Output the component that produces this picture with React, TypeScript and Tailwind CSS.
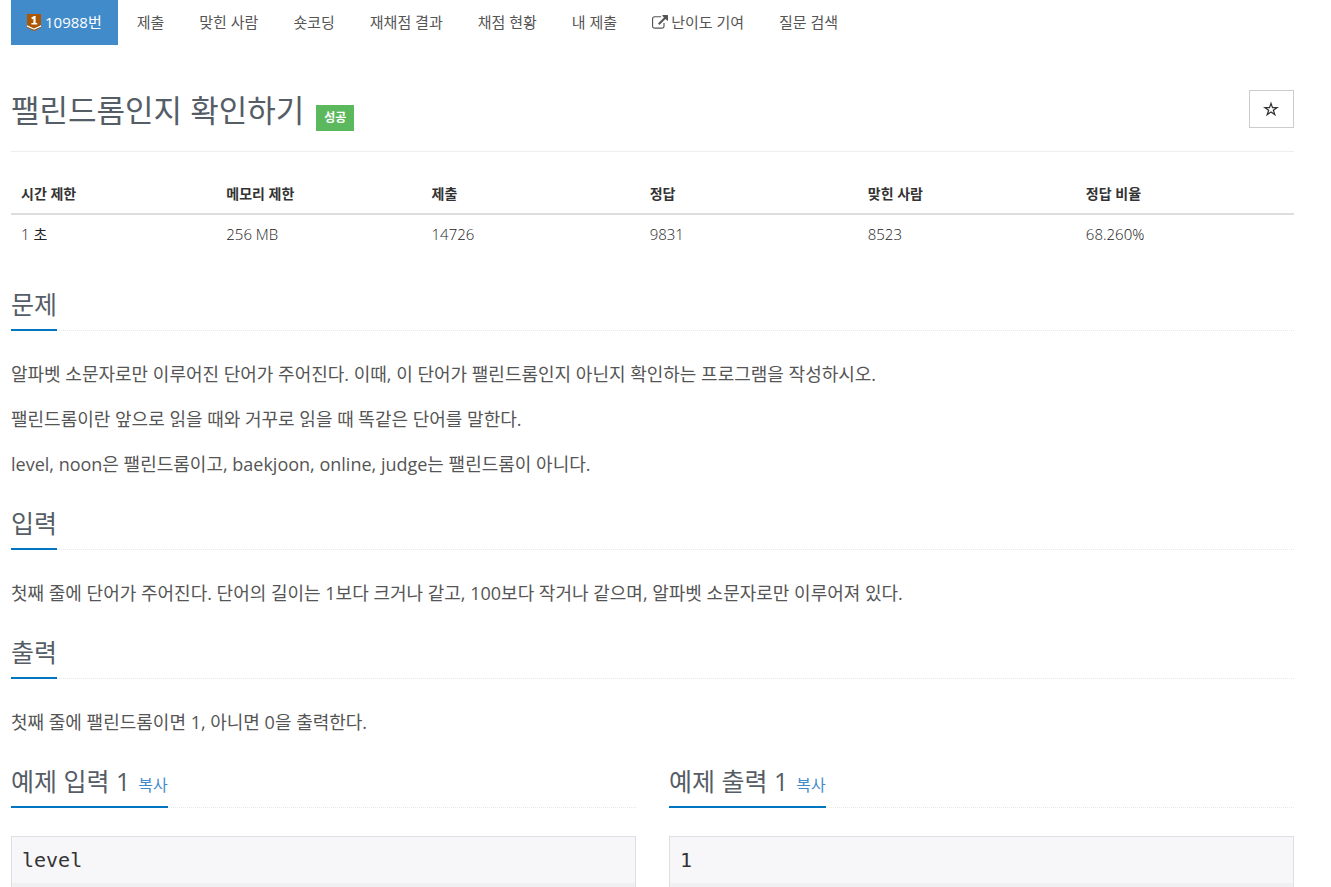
import type { ReactNode } from "react";

const tabs = ["제출", "맞힌 사람", "숏코딩", "재채점 결과", "채점 현황", "내 제출", "난이도 기여", "질문 검색"];

const stats = [
  { label: "시간 제한", value: "1 초", width: "w-[16%]" },
  { label: "메모리 제한", value: "256 MB", width: "w-[16%]" },
  { label: "제출", value: "14726", width: "w-[17%]" },
  { label: "정답", value: "9831", width: "w-[17%]" },
  { label: "맞힌 사람", value: "8523", width: "w-[17%]" },
  { label: "정답 비율", value: "68.260%", width: "w-[17%]" },
];

function TierIcon() {
  return (
    <svg viewBox="0 0 14 17" className="h-[17px] w-[14px]" aria-hidden="true">
      <path d="M0 0H14V11.5L7 14.6L0 11.5Z" fill="#ad5600" />
      <path d="M0 11.3L7 14.4L14 11.3V13L7 16L0 13Z" fill="#ffffff" />
      <path d="M0 12.8L7 15.8L14 12.8V13.8L7 17L0 13.8Z" fill="#ad5600" />
      <path d="M4.2 3.8L7 2H8.600V9H10.2V10.6H4.4V9H6.400V4.600L5.100 5.400Z" fill="#ffffff" />
    </svg>
  );
}

function ExternalLinkIcon() {
  return (
    <svg viewBox="0 0 1792 1792" className="size-4" fill="currentColor" aria-hidden="true">
      <path d="M1408 928v320q0 119-84.500 203.500T1120 1536H288q-119 0-203.500-84.500T0 1248V416q0-119 84.500-203.500T288 128h704q14 0 23 9t9 23v64q0 14-9 23t-23 9H288q-66 0-113 47t-47 113v832q0 66 47 113t113 47h832q66 0 113-47t47-113V928q0-14 9-23t23-9h64q14 0 23 9t9 23zm384-864v512q0 26-19 45t-45 19-45-19l-176-176-652 652q-10 10-23 10t-23-10L695 983q-10-10-10-23t10-23l652-652-176-176q-19-19-19-45t19-45 45-19h512q26 0 45 19t19 45z" />
    </svg>
  );
}

function Headline({ children }: { children: ReactNode }) {
  return (
    <div className="mb-7 flex border-b border-dotted border-[#e4e9f0]">
      <h2 className="-mb-px flex items-baseline gap-2 border-b-2 border-[#0076c0] pb-2 text-[25px] leading-[34px] text-[#555d66]">
        {children}
      </h2>
    </div>
  );
}

function Section({ title, paragraphs }: { title: string; paragraphs: string[] }) {
  return (
    <section className="mb-[27px]">
      <Headline>{title}</Headline>
      <div className="flex flex-col gap-[15px]">
        {paragraphs.map((p) => (
          <p key={p} className="text-lg leading-[30px] text-[#555555]">
            {p}
          </p>
        ))}
      </div>
    </section>
  );
}

function Sample({ title, data }: { title: string; data: string }) {
  return (
    <section>
      <Headline>
        {title}
        <button type="button" className="text-base leading-6 text-[#428bca]">
          복사
        </button>
      </Headline>
      <div className="border border-[#dedfe4] bg-[#f7f7f9]">
        <pre className="px-[10px] py-2 font-['DejaVu_Sans_Mono',monospace] text-xl leading-[30px] text-[#333333]">
          {data}
        </pre>
        <div className="h-4 bg-[#f0f0f0]" />
      </div>
    </section>
  );
}

export default function App() {
  return (
    <main className="h-screen overflow-hidden bg-white pr-[37px] pl-[11px] font-['Open_Sans','Noto_Sans_CJK_KR',sans-serif] text-[#333333]">
      <nav className="flex gap-[3px] text-[15px] leading-[45px] text-[#555555]">
        <a href="#problem" className="flex items-center gap-1 bg-[#428bca] px-4 text-white">
          <TierIcon />
          10988번
        </a>
        {tabs.map((tab) => (
          <a key={tab} href="#tab" className="flex items-center gap-[3px] px-4">
            {tab === "난이도 기여" && <ExternalLinkIcon />}
            {tab}
          </a>
        ))}
      </nav>

      <header id="problem" className="mt-[45px] flex items-start justify-between border-b border-[#eeeeee] pb-[21px]">
        <div className="flex items-end gap-3">
          <h1 className="text-[31px] leading-10 text-[#555d66]">팰린드롬인지 확인하기</h1>
          <span className="-mb-px bg-[#5cb85c] px-2 text-xs leading-[26px] font-bold text-white">성공</span>
        </div>
        <button type="button" aria-label="즐겨찾기" className="flex h-[38px] w-[45px] items-center justify-center border border-[#cccccc]">
          <svg viewBox="0 0 17 17" className="size-[17px]" fill="#333333" fillRule="evenodd" aria-hidden="true">
            <path d="M8 0.500L9.900 6H16L11.100 9.500L13 15.200L8 11.700L3 15.200L4.900 9.500L0 6H6.100ZM8 4.200L6.900 7.300H3.900L6.400 9L5.400 12L8 10.200L10.600 12L9.600 9L12.100 7.300H9.100Z" />
          </svg>
        </button>
      </header>

      <table className="mt-[23px] mb-[33px] w-full table-fixed text-left">
        <thead>
          <tr className="border-b-2 border-[#dddddd]">
            {stats.map((s) => (
              <th key={s.label} className={`${s.width} px-[10px] pt-2 pb-[9px] text-sm leading-[21px] font-bold`}>
                {s.label}
              </th>
            ))}
          </tr>
        </thead>
        <tbody className="font-['Open_Sans_Light','Open_Sans','Noto_Sans_CJK_KR',sans-serif] text-[#222222]">
          <tr>
            {stats.map((s) => (
              <td key={s.label} className="px-[10px] py-[9px] text-[15px] leading-[21px]">
                {s.value}
              </td>
            ))}
          </tr>
        </tbody>
      </table>

      <Section
        title="문제"
        paragraphs={[
          "알파벳 소문자로만 이루어진 단어가 주어진다. 이때, 이 단어가 팰린드롬인지 아닌지 확인하는 프로그램을 작성하시오.",
          "팰린드롬이란 앞으로 읽을 때와 거꾸로 읽을 때 똑같은 단어를 말한다.",
          "level, noon은 팰린드롬이고, baekjoon, online, judge는 팰린드롬이 아니다.",
        ]}
      />
      <Section
        title="입력"
        paragraphs={["첫째 줄에 단어가 주어진다. 단어의 길이는 1보다 크거나 같고, 100보다 작거나 같으며, 알파벳 소문자로만 이루어져 있다."]}
      />
      <Section title="출력" paragraphs={["첫째 줄에 팰린드롬이면 1, 아니면 0을 출력한다."]} />

      <div className="grid grid-cols-2 gap-[33px]">
        <Sample title="예제 입력 1" data="level" />
        <Sample title="예제 출력 1" data="1" />
      </div>
    </main>
  );
}
